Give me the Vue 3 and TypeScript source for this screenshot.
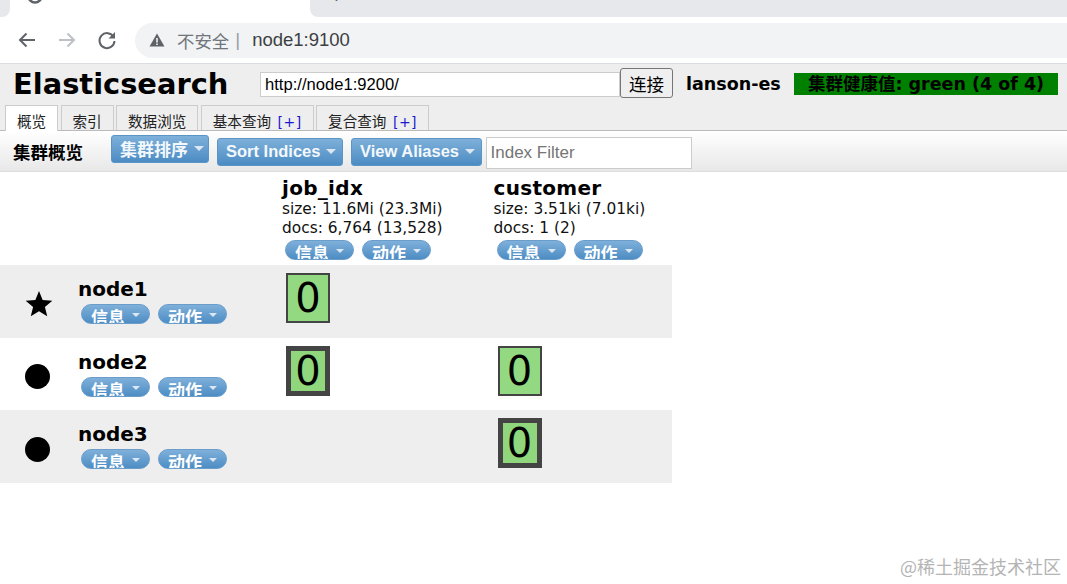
<script setup lang="ts">
interface IndexCol { name: string; size: string; docs: string }
interface NodeRow { name: string; master: boolean; shards: { value: string; primary: boolean }[] }

const indices: IndexCol[] = [
  { name: 'job_idx', size: 'size: 11.6Mi (23.3Mi)', docs: 'docs: 6,764 (13,528)' },
  { name: 'customer', size: 'size: 3.51ki (7.01ki)', docs: 'docs: 1 (2)' },
]
const nodes: NodeRow[] = [
  { name: 'node1', master: true, shards: [{ value: '0', primary: false }] },
  { name: 'node2', master: false, shards: [{ value: '0', primary: true }, { value: '0', primary: false }] },
  { name: 'node3', master: false, shards: [{ value: '', primary: false }, { value: '0', primary: true }] },
]
const tabs = ['概览', '索引', '数据浏览', '基本查询', '复合查询']
</script>

<template>
  <div class="page">
    <div class="tabstrip">
      <div class="strip-edge left" />
      <div class="browser-tab">
        <svg class="favicon" viewBox="0 0 16 16" width="16" height="16"><circle cx="8" cy="8" r="6.5" fill="none" stroke="#5f6368" stroke-width="2.6" /></svg>
        <span class="tab-title">elasticsearch-head</span>
        <span class="tab-close">×</span>
      </div>
      <div class="strip-edge right"><span class="newtab">+</span></div>
    </div>
    <div class="omnibar">
      <svg class="nav" viewBox="0 0 24 24" width="24" height="24"><path d="M20 12H5M11.5 5.500 5 12l6.500 6.500" fill="none" stroke="#5f6368" stroke-width="2" /></svg>
      <svg class="nav" viewBox="0 0 24 24" width="24" height="24"><path d="M4 12h15M12.500 5.500 19 12l-6.500 6.500" fill="none" stroke="#bdc1c6" stroke-width="2" /></svg>
      <svg class="nav" viewBox="0 0 24 24" width="24" height="24"><path d="M18.600 9A7.500 7.500 0 1 0 19.500 13" fill="none" stroke="#5f6368" stroke-width="2" /><path d="M20 4v6.500h-6.500z" fill="#5f6368" /></svg>
      <div class="address">
        <svg viewBox="0 0 16 16" width="16" height="16"><path d="M8 1.500 15.500 14.500H.5z" fill="#5f6368" /><path d="M7.200 6h1.600v4.600H7.200zM7.200 11.400h1.600v1.500H7.200z" fill="#f1f3f4" /></svg>
        <span class="insecure">不安全</span>
        <span class="pipe">|</span>
        <span class="url">node1:9100</span>
      </div>
    </div>

    <header class="head">
      <div class="titlebar">
        <h1>Elasticsearch</h1>
        <input class="cluster-url" value="http://node1:9200/" />
        <button class="connect">连接</button>
        <span class="cluster-name">lanson-es</span>
        <span class="health">集群健康值: green (4 of 4)</span>
      </div>
      <nav class="tabs">
        <div v-for="(tab, i) in tabs" :key="tab" class="tab" :class="{ active: i === 0 }">
          {{ tab }}<span v-if="i > 2" class="plus">[+]</span>
        </div>
      </nav>
    </header>

    <div class="toolbar">
      <h2>集群概览</h2>
      <button class="menu cjk">集群排序<i class="caret" /></button>
      <button class="menu">Sort Indices<i class="caret" /></button>
      <button class="menu">View Aliases<i class="caret" /></button>
      <input class="filter" placeholder="Index Filter" />
    </div>

    <section class="overview">
      <div class="row header">
        <div class="nodecell" />
        <div v-for="ix in indices" :key="ix.name" class="col">
          <h3>{{ ix.name }}</h3>
          <p>{{ ix.size }}</p>
          <p>{{ ix.docs }}</p>
          <div class="pills"><span class="pill">信息<i class="caret" /></span><span class="pill">动作<i class="caret" /></span></div>
        </div>
      </div>
      <div v-for="n in nodes" :key="n.name" class="row node">
        <div class="nodecell">
          <div class="mark">
            <svg v-if="n.master" viewBox="0 0 28 28" width="28" height="28"><path d="M14 1 17.640 9.980 27.300 10.670 19.900 16.920 22.230 26.330 14 21.200 5.770 26.330 8.100 16.920 .7 10.670 10.360 9.980z" /></svg>
            <span v-else class="dot" />
          </div>
          <div class="nodeinfo">
            <h3>{{ n.name }}</h3>
            <div class="pills"><span class="pill">信息<i class="caret" /></span><span class="pill">动作<i class="caret" /></span></div>
          </div>
        </div>
        <div v-for="(s, i) in n.shards" :key="i" class="col shardcol">
          <div v-if="s.value" class="shard" :class="{ primary: s.primary }">{{ s.value }}</div>
        </div>
      </div>
    </section>

    <div class="watermark">@稀土掘金技术社区</div>
  </div>
</template>

<style>
html, body { margin: 0; background: #fff; }
</style>

<style scoped>
.page { position: relative; width: 1067px; height: 584px; overflow: hidden; background: #fff; font-family: "DejaVu Sans", "Noto Sans CJK SC", sans-serif; color: #000; }
.tabstrip { height: 17px; display: flex; }
.strip-edge { background: #e7e8eb; height: 17px; }
.strip-edge.left { width: 10px; border-radius: 0 0 8px 0; }
.strip-edge.right { flex: 1; border-radius: 0 0 0 8px; position: relative; overflow: hidden; }
.browser-tab { width: 300px; height: 17px; background: #fff; position: relative; overflow: hidden; }
.favicon { position: absolute; left: 17px; top: -12px; }
.tab-title { position: absolute; left: 45px; top: -15px; font: 16px/20px "Liberation Sans", sans-serif; color: #5f6368; white-space: nowrap; }
.tab-close { position: absolute; left: 281px; top: -14px; font: 18px/20px "Liberation Sans", sans-serif; color: #5f6368; }
.newtab { position: absolute; left: 20px; top: -14px; font: 22px/20px "Liberation Sans", sans-serif; color: #5f6368; }
.omnibar { height: 46px; background: #fff; display: flex; align-items: center; padding-left: 15px; gap: 17px; border-bottom: 1px solid #dadce0; }
.nav { flex: none; margin-right: -1px; }
.address { flex: 1; height: 35px; background: #f1f3f4; border-radius: 18px 0 0 18px; display: flex; align-items: center; padding-left: 14px; font-family: "Liberation Sans", "Noto Sans CJK SC", sans-serif; font-size: 18.5px; }
.insecure { margin-left: 12px; color: #70757a; font-size: 17.4px; }
.pipe { margin-left: 6px; color: #9aa0a6; font-size: 19px; }
.url { margin-left: 12px; color: #3c4043; }
.head { background: #eee; border-bottom: 1px solid #bbb; height: 67px; box-sizing: border-box; }
.titlebar { height: 41px; display: flex; align-items: center; padding-left: 13px; }
h1 { margin: -2px 0 0; width: 247px; font-size: 28.9px; line-height: 38px; font-weight: 700; white-space: nowrap; }
.cluster-url { width: 360px; height: 25px; box-sizing: border-box; border: 1px solid #ccc; background: #fff; padding: 0 4px; font: 16.600px "Liberation Sans", sans-serif; color: #000; outline: none; }
.connect { width: 53px; height: 30px; margin-top: -3px; box-sizing: border-box; padding: 0; border: 1px solid #767676; border-radius: 3px; background: #efefef; font: 17.500px "Noto Sans CJK SC", sans-serif; color: #000; }
.cluster-name { margin: -2px 0 0 13px; width: 108px; font-size: 17.500px; font-weight: 700; white-space: nowrap; }
.health { width: 264px; height: 22px; margin-top: -2px; box-sizing: border-box; background: #008000; text-align: center; font-size: 17.500px; line-height: 22px; font-weight: 700; white-space: nowrap; color: #000; }
.tabs { display: flex; gap: 2.300px; padding-left: 5px; height: 25px; }
.tab { height: 25px; box-sizing: border-box; border: 1px solid #ccc; border-bottom: none; padding: 0 11px; font: 14.600px/29px "Noto Sans CJK SC", sans-serif; color: #222; white-space: nowrap; overflow: hidden; }
.tab.active { background: #fff; height: 26px; }
.plus { color: #1a1ad0; margin-left: 6.500px; letter-spacing: .5px; font-family: "DejaVu Sans", sans-serif; font-size: 14px; }
.toolbar { height: 41px; box-sizing: border-box; display: flex; align-items: center; padding-left: 13px; background: linear-gradient(#fff, #e8e8e8); border-bottom: 1px solid #ddd; }
h2 { margin: 0 28px 0 0; font: 700 17.500px "Noto Sans CJK SC", sans-serif; }
.menu { height: 28px; box-sizing: border-box; border: 1px solid #5b95c6; border-radius: 3px; padding: 0 5.500px 0 8px; margin: 1px 8px 0 0; background: linear-gradient(#7eb0da, #4c8cc3); color: #f3f8fc; font: 700 16.500px "Liberation Sans", "Noto Sans CJK SC", sans-serif; display: inline-flex; align-items: center; white-space: nowrap; }
.menu.cjk { margin-top: -5px; font-size: 17px; padding-right: 4px; }
.filter { width: 206px; height: 32px; box-sizing: border-box; margin: 3px 0 0 -4px; border: 1px solid #ccc; background: #fff; padding: 0 4px; font: 17px "Liberation Sans", sans-serif; outline: none; }
.filter::placeholder { color: #757575; }
.caret { display: inline-block; width: 0; height: 0; border: 5px solid transparent; border-top: 5px solid #dbe8f3; border-bottom: none; margin-left: 6px; }
.overview { width: 672px; }
.row { display: flex; }
.header { height: 93px; }
.node { height: 72.700px; }
.node:nth-child(even) { background: #eee; }
.nodecell { width: 282px; flex: none; display: flex; }
.mark { width: 78px; display: flex; align-items: center; padding: 5px 0 0 25px; box-sizing: border-box; }
.dot { width: 25px; height: 25px; border-radius: 50%; background: #000; }
.nodeinfo { padding-top: 12px; }
.nodeinfo .pills { padding-top: 3px; }
.col { width: 211.500px; flex: none; }
.header .col { padding-top: 4px; }
h3 { margin: 0; font-size: 20px; line-height: 24px; font-weight: 700; }
.header h3 { letter-spacing: .3px; }
p { margin: 0; font-size: 15.400px; line-height: 18.500px; color: #111; white-space: nowrap; }
.header .pills { padding-top: 3px; }
.pills { display: flex; gap: 8px; padding-left: 3px; }
.pill { width: 69px; height: 20px; box-sizing: border-box; border-radius: 10px; border: 1px solid #6b9dcb; background: linear-gradient(#7fb0da, #4d8dc4); color: #fff; font: 700 17px/23px "Noto Sans CJK SC", sans-serif; padding-left: 9px; overflow: hidden; display: flex; align-items: flex-start; white-space: nowrap; }
.pill .caret { margin: 8px 0 0 7px; flex: none; border-width: 4px; border-top-width: 4px; border-bottom: none; }
.shardcol { padding: 8px 0 0 4px; box-sizing: border-box; }
.shard { width: 44px; height: 50px; box-sizing: border-box; border: 2px solid #444; background: #93d982; font-size: 40px; line-height: 46px; text-align: center; color: #000; }
.shard.primary { border-width: 5px; line-height: 40px; background: #8fd67d; }
.watermark { position: absolute; right: 6px; bottom: 5px; font: 18px "Noto Sans CJK SC", sans-serif; color: #b4b4b4; }
</style>
